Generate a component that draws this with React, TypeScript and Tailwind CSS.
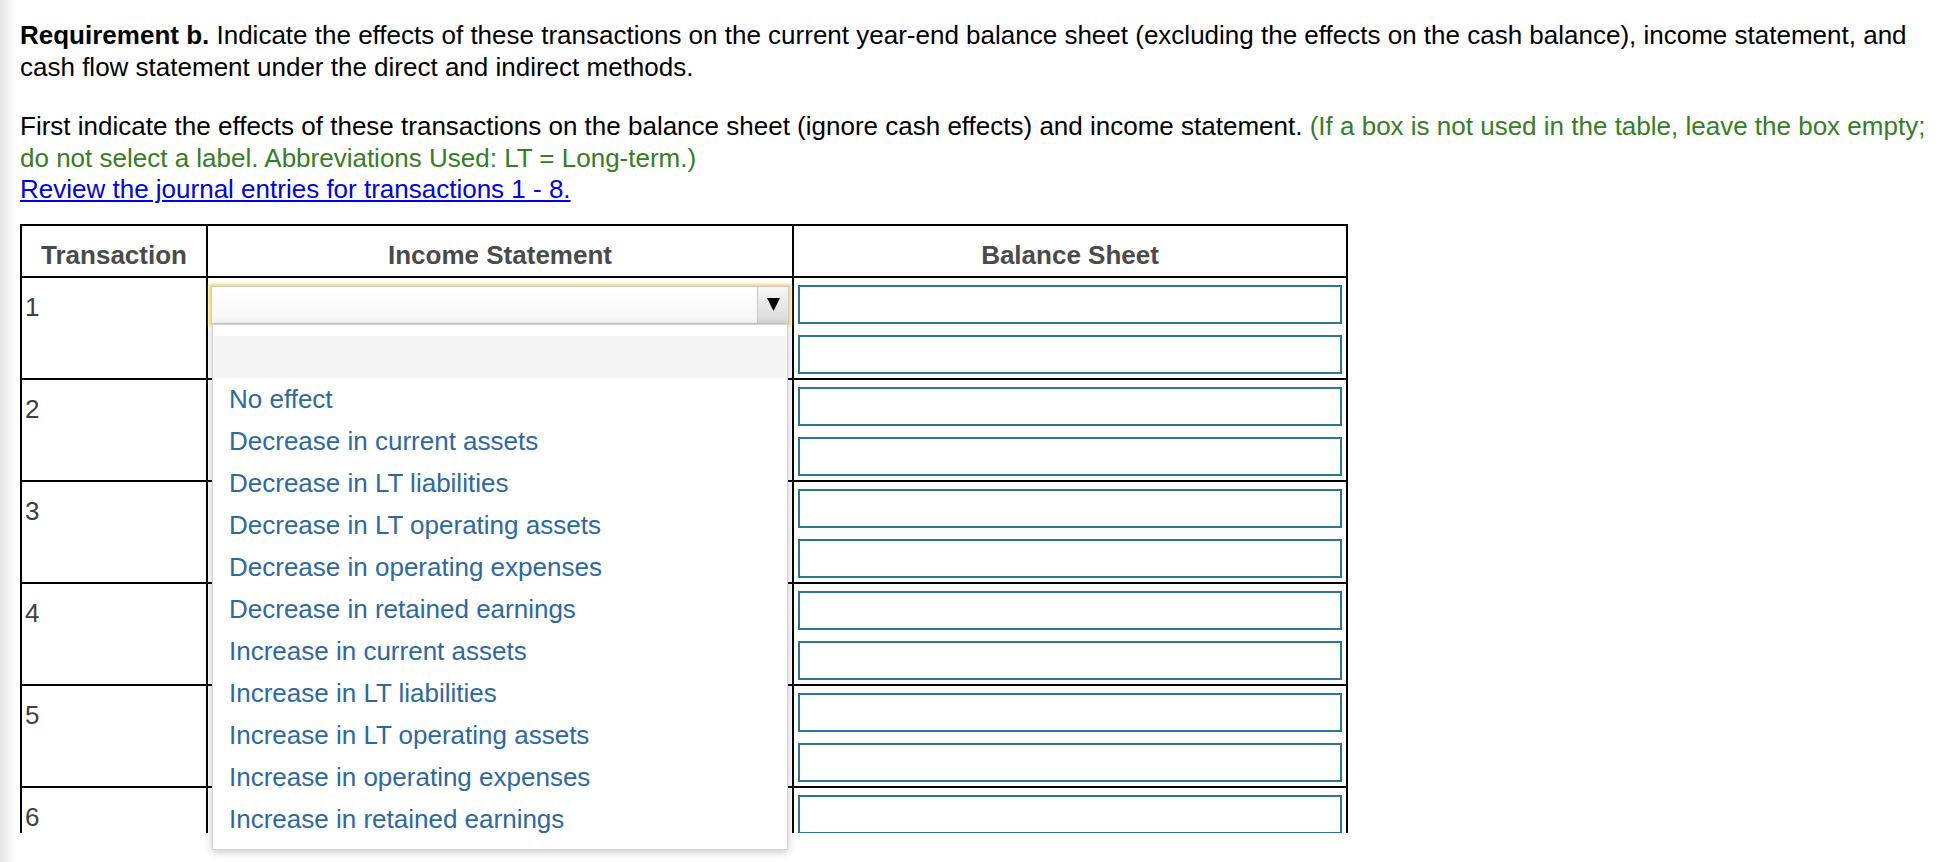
import React from "react";

const options = [
  "No effect",
  "Decrease in current assets",
  "Decrease in LT liabilities",
  "Decrease in LT operating assets",
  "Decrease in operating expenses",
  "Decrease in retained earnings",
  "Increase in current assets",
  "Increase in LT liabilities",
  "Increase in LT operating assets",
  "Increase in operating expenses",
  "Increase in retained earnings",
];

function BoxPair() {
  return (
    <div className="flex flex-col gap-[11px] px-[4px] pt-[7px]">
      <div className="h-[39px] border-2 border-[#2f7593] bg-white" />
      <div className="h-[39px] border-2 border-[#2f7593] bg-white" />
    </div>
  );
}

function Row({ n, first }: { n: number; first?: boolean }) {
  return (
    <div className="flex h-[102px] border-b-2 border-black">
      <div className="w-[186px] shrink-0 border-r-2 border-black pl-[3px] pt-[14px] text-[#404040] leading-[30px]">
        {n}
      </div>
      <div className="w-[586px] shrink-0 border-r-2 border-black">
        {first && (
          <div className="mx-[3px] mt-[8px] flex h-[38px] justify-end border border-[#cccccc] bg-linear-to-b from-white to-[#f6f6f6] shadow-[0_0_3px_2px_rgba(246,212,90,0.95)]">
            <div className="flex w-[31px] items-center justify-center border-l border-[#c8c8c8] bg-linear-to-b from-[#f7f7f7] to-[#d9d9d9]">
              <svg width="13" height="13" viewBox="0 0 13 13">
                <polygon points="0,0 13,0 6.5,13" fill="#000" />
              </svg>
            </div>
          </div>
        )}
      </div>
      <div className="flex-1">
        <BoxPair />
      </div>
    </div>
  );
}

export default function App() {
  return (
    <div className="relative h-[862px] w-[1942px] overflow-hidden bg-white font-['Liberation_Sans',Arial,sans-serif] text-[26px] text-black">
      <div className="pointer-events-none absolute left-0 top-0 z-10 h-full w-[16px] bg-linear-to-r from-[#e4e4e4] to-transparent" />
      <div className="pl-[20px] pr-[12px] pt-[20px] leading-[31.5px]">
        <p>
          <b>Requirement b.</b> Indicate the effects of these transactions on the current
          year-end balance sheet (excluding the effects on the cash balance), income statement,
          and cash flow statement under the direct and indirect methods.
        </p>
        <p className="mt-[28px]">
          First indicate the effects of these transactions on the balance sheet (ignore cash
          effects) and income statement.{" "}
          <span className="text-[#367d24]">
            (If a box is not used in the table, leave the box empty; do not select a label.
            Abbreviations Used: LT = Long-term.)
          </span>
          <br />
          <a className="text-[#0000ee] underline">Review the journal entries for transactions 1 - 8.</a>
        </p>
      </div>

      <div className="ml-[20px] mt-[18px] h-[609px] w-[1328px] overflow-hidden">
        <div className="border-x-2 border-t-2 border-black">
          <div className="flex h-[52px] border-b-2 border-black font-bold text-[#4a4a4a]">
            <div className="w-[186px] shrink-0 border-r-2 border-black pt-[14px] text-center leading-[30px]">
              Transaction
            </div>
            <div className="w-[586px] shrink-0 border-r-2 border-black pt-[14px] text-center leading-[30px]">
              Income Statement
            </div>
            <div className="flex-1 pt-[14px] text-center leading-[30px]">Balance Sheet</div>
          </div>
          {[1, 2, 3, 4, 5, 6].map((n) => (
            <Row key={n} n={n} first={n === 1} />
          ))}
        </div>
      </div>

      <div className="absolute left-[212px] top-[324px] z-20 w-[576px] border border-[#d3d3d3] bg-white pb-[9px] pt-[11px] shadow-[0_2px_8px_rgba(0,0,0,0.22)]">
        <div className="h-[42px] bg-[#f4f4f4]" />
        {options.map((o) => (
          <div key={o} className="flex h-[42px] items-center pl-[16px] leading-[30px] text-[#2c68a2]">
            {o}
          </div>
        ))}
      </div>
    </div>
  );
}
